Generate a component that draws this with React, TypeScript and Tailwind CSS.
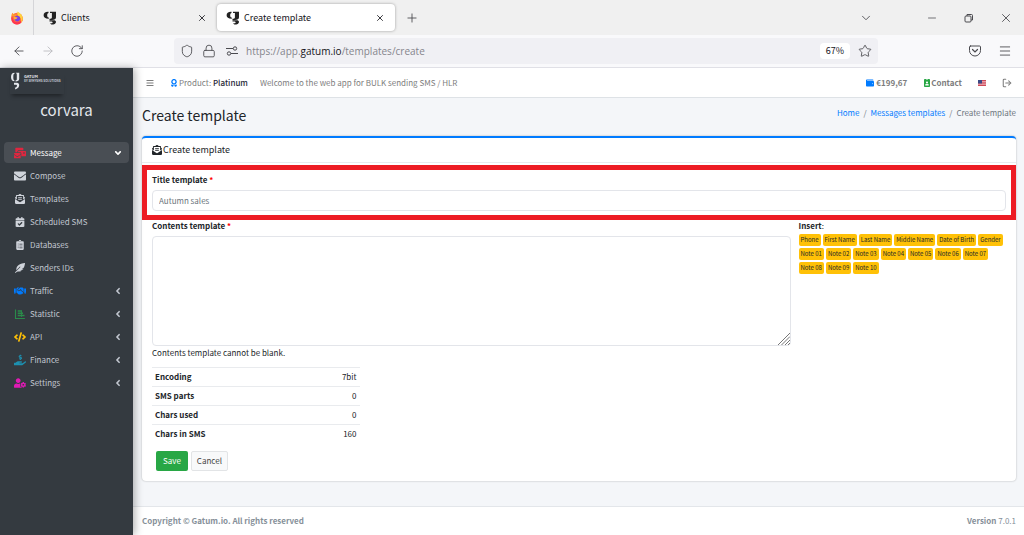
import type { ReactNode } from "react";
import type { IconType } from "react-icons";
import {
  FaAngleDown,
  FaAngleLeft,
  FaAward,
  FaBars,
  FaCalendarCheck,
  FaClipboardList,
  FaCode,
  FaEnvelope,
  FaEnvelopeOpenText,
  FaFeatherAlt,
  FaHandHoldingUsd,
  FaHandshake,
  FaIdBadge,
  FaMailBulk,
  FaUserCog,
  FaWallet,
} from "react-icons/fa";
import {
  ArrowLeft,
  ArrowRight,
  ChevronDown,
  Lock,
  LogOut,
  Menu,
  Minus,
  Plus,
  RotateCw,
  Shield,
  Star,
  X,
} from "lucide-react";

type NavItem = {
  label: string;
  icon: IconType;
  color: string;
  state?: "open" | "closed";
};

const ChartIcon: IconType = ({ className }) => (
  <svg viewBox="0 0 16 16" className={className} fill="none" stroke="currentColor" aria-hidden="true">
    <path d="M2 2v12h12.500" strokeWidth="1.500" />
    <path d="M5 4h5M5 7h7M5 10h9" strokeWidth="1.700" />
    <path d="M10 3v9" strokeWidth="1.200" />
  </svg>
);

const NAV: NavItem[] = [
  { label: "Message", icon: FaMailBulk, color: "text-[#e0263f]", state: "open" },
  { label: "Compose", icon: FaEnvelope, color: "text-[#d0d4db]" },
  { label: "Templates", icon: FaEnvelopeOpenText, color: "text-[#d0d4db]" },
  { label: "Scheduled SMS", icon: FaCalendarCheck, color: "text-[#d0d4db]" },
  { label: "Databases", icon: FaClipboardList, color: "text-[#d0d4db]" },
  { label: "Senders IDs", icon: FaFeatherAlt, color: "text-[#d0d4db]" },
  { label: "Traffic", icon: FaHandshake, color: "text-[#007bff]", state: "closed" },
  { label: "Statistic", icon: ChartIcon, color: "text-[#2a8a4a]", state: "closed" },
  { label: "API", icon: FaCode, color: "text-[#ffc107]", state: "closed" },
  { label: "Finance", icon: FaHandHoldingUsd, color: "text-[#1d90b0]", state: "closed" },
  { label: "Settings", icon: FaUserCog, color: "text-[#e01ab4]", state: "closed" },
];

const TAGS = [
  "Phone", "First Name", "Last Name", "Middle Name", "Date of Birth", "Gender",
  "Note 01", "Note 02", "Note 03", "Note 04", "Note 05", "Note 06", "Note 07",
  "Note 08", "Note 09", "Note 10",
];

const STATS = [
  ["Encoding", "7bit"],
  ["SMS parts", "0"],
  ["Chars used", "0"],
  ["Chars in SMS", "160"],
];

function GatumMark({ className }: { className?: string }) {
  return (
    <svg viewBox="0 0 14 14" className={className} fill="currentColor" aria-hidden="true">
      <path d="M5.500.8C2.400.6.600 2 .600 4.200S2.600 7.800 5.800 7.700V6.600C4.600 6.500 4.200 5.700 4.200 4.200S4.600 2 5.500 1.900z" />
      <path d="M7 .8h6v5.400c0 1.800-1.400 2.700-4 2.700H6.500V7.800c1.700 0 2.400-.4 2.400-1.600V2H7z" />
      <path d="M6.500 9.300h4c1.700 0 2.500.6 2.500 1.700 0 1.700-1.700 2.600-4.700 2.600l-1.300-1.300c1.700 0 2.600-.3 2.600-.9s-.5-.8-1.600-.8H6.500z" />
    </svg>
  );
}

function Firefox() {
  return (
    <svg viewBox="0 0 24 24" className="size-3.5" aria-hidden="true">
      <circle cx="12" cy="13" r="10" fill="#ff7139" />
      <path d="M3 8C1 15 4 23 12 23s11-7 9.500-13c-1 8-6 10-11 9S5 12 3 8z" fill="#ff3550" />
      <path d="M13 1c5 3 9 7 9 12 0 3-1 5-3 7 1-6-1-9-4-11s-3-5-2-8z" fill="#ffd23e" />
      <path d="M2 8l2-5 3 3 5 0-3 4z" fill="#ff9a2e" />
      <circle cx="12.500" cy="13" r="4.800" fill="#7542e5" />
      <path d="M6 11c3-2 5 0 7 0-1 3-4 2-5 4z" fill="#ffb13b" />
    </svg>
  );
}

function BrowserTab({ title, active }: { title: string; active?: boolean }) {
  return (
    <div
      className={`flex items-center px-2 text-[#15141a] ${
        active ? "my-1 w-[178px] rounded-sm bg-white shadow-[0_0_3px_rgba(0,0,0,0.35)]" : "w-[183px]"
      }`}
    >
      <GatumMark className="mr-1 ml-px size-3.5 text-[#222]" />
      <span className="flex-1">{title}</span>
      <button type="button" aria-label={`Close ${title}`} className="px-0.5">
        <X className="size-2.5" strokeWidth={2} />
      </button>
    </div>
  );
}

function BrowserChrome() {
  return (
    <header className="font-['Noto_Sans_CJK_SC',sans-serif] text-[9px] leading-4 text-[#4a4a4f]">
      <div className="flex h-[35px] bg-[#f0f0f0]">
        <div className="flex w-[34px] items-center justify-center border-r border-[#d5d5d8]">
          <Firefox />
        </div>
        <BrowserTab title="Clients" />
        <BrowserTab title="Create template" active />
        <button type="button" aria-label="New tab" className="px-2.5">
          <Plus className="size-3.5" strokeWidth={1.5} />
        </button>
        <div className="ml-auto flex items-center">
          <button type="button" aria-label="List all tabs" className="mr-[53px]">
            <ChevronDown className="size-3.5" strokeWidth={1.5} />
          </button>
          <button type="button" aria-label="Minimize" className="mr-[26px]">
            <Minus className="size-3" strokeWidth={1.5} />
          </button>
          <button type="button" aria-label="Restore" className="mr-[25px]">
            <svg viewBox="0 0 10 10" className="size-2.5" fill="none" stroke="currentColor">
              <rect x="1" y="3" width="6" height="6" rx="1" />
              <path d="M3 3V1.500h4.500a1 1 0 0 1 1 1V7H7" />
            </svg>
          </button>
          <button type="button" aria-label="Close" className="mr-[11px]">
            <X className="size-3.5" strokeWidth={1.5} />
          </button>
        </div>
      </div>
      <div className="flex h-[33px] items-center border-b border-[#e0e0e6] bg-[#f9f9fb]">
        <button type="button" aria-label="Back" className="ml-3">
          <ArrowLeft className="size-3.5" strokeWidth={1.5} />
        </button>
        <button type="button" aria-label="Forward" className="ml-[15px] text-[#b9b9be]">
          <ArrowRight className="size-3.5" strokeWidth={1.5} />
        </button>
        <button type="button" aria-label="Reload" className="ml-[15px]">
          <RotateCw className="size-3.5" strokeWidth={1.5} />
        </button>
        <div className="mr-[90px] ml-[90px] flex h-[26px] flex-1 items-center rounded-sm bg-[#f0f0f4] px-1.5">
          <Shield className="size-3.5" strokeWidth={1.5} />
          <Lock className="ml-2 size-3.5" strokeWidth={1.5} />
          <svg viewBox="0 0 12 10" className="ml-2.5 h-2.5 w-3" fill="none" stroke="currentColor" aria-hidden="true">
            <path d="M0 2.500h7M5 7.500h7" />
            <circle cx="9" cy="2.500" r="1.700" />
            <circle cx="3" cy="7.500" r="1.700" />
          </svg>
          <p className="ml-2 flex-1 font-['Open_Sans',sans-serif] text-[10px] text-[#85858c]">
            https://app.<span className="text-[#15141a]">gatum.io</span>/templates/create
          </p>
          <span className="rounded-sm bg-white px-1.5 text-[#15141a]">67%</span>
          <button type="button" aria-label="Bookmark" className="ml-2">
            <Star className="size-3.5" strokeWidth={1.5} />
          </button>
        </div>
        <button type="button" aria-label="Save to Pocket" className="mr-4">
          <svg viewBox="0 0 14 14" className="size-3.5" fill="none" stroke="currentColor" strokeLinecap="round">
            <path d="M2.500 2h9a1 1 0 0 1 1 1v3.500a5.500 5.500 0 0 1-11 0V3a1 1 0 0 1 1-1z" />
            <path d="M4.500 5.500L7 8l2.500-2.500" strokeWidth="1.200" />
          </svg>
        </button>
        <button type="button" aria-label="Open menu" className="mr-3">
          <Menu className="size-3.5" strokeWidth={1.5} />
        </button>
      </div>
    </header>
  );
}

function Sidebar() {
  return (
    <aside className="z-10 w-[133px] shrink-0 bg-[#343a40] px-1 text-[#c2c7d0] shadow-[2px_0_8px_rgba(0,0,0,0.3)]">
      <a href="#" className="mt-1 ml-1.5 flex w-[54px] items-start gap-1 pb-1 text-[#e4e7ec] shadow-[0_4px_4px_-2px_rgba(0,0,0,0.4)]">
        <svg viewBox="0 0 10 18" className="h-[18px] w-2.5 shrink-0" fill="currentColor" aria-hidden="true">
          <path d="M4.500.8C2.300.8 1 2.300 1 5s1.300 4.300 3.500 4.300V8.400C3.600 8.200 3.300 7.200 3.300 5s.3-3 1.200-3.200z" />
          <path d="M5.500.8c.9.200 1.300.8 1.300 2V7c0 1-.4 1.300-1.300 1.500v1c2.400 0 3.700-.8 3.700-2.700V.8z" />
          <path d="M4 10.800h3c1.500.2 2.200 1 2.200 2.300 0 2-1.400 3.600-3.700 4.300l-.7-1.700c1.500-.4 2.200-1.200 2.200-2 0-.7-.5-1-1.300-1H4z" />
        </svg>
        <span className="pt-0.5 text-[4px] leading-[5px] font-bold whitespace-nowrap">
          GATUM
          <span className="block text-[3px] text-[#c2c7d0]">BY SEMYSMS SOLUTIONS</span>
        </span>
      </a>
      <p className="mt-1 text-center text-[15px] leading-6 text-[#e4e7ec]">corvara</p>
      <nav className="mt-5">
        <ul className="flex flex-col gap-0.5">
          {NAV.map(({ label, icon: Icon, color, state }) => (
            <li key={label}>
              <a
                href="#"
                className={`flex h-[21px] items-center rounded-sm pr-1.5 pl-2.5 ${
                  state === "open" ? "bg-[#494e54] text-white" : ""
                }`}
              >
                <span className="flex w-4 justify-start">
                  <Icon className={`${state || label === "Compose" ? "size-3" : "mx-px size-2.5"} ${color}`} />
                </span>
                <span className="flex-1">{label}</span>
                {state === "open" && <FaAngleDown className="size-2.5" />}
                {state === "closed" && <FaAngleLeft className="size-2.5" />}
              </a>
            </li>
          ))}
        </ul>
      </nav>
    </aside>
  );
}

function UsFlag() {
  return (
    <svg viewBox="0 0 8 6" className="h-1.5 w-2" aria-label="English">
      <path d="M0 0h8v6H0z" fill="#f4c9cd" />
      <path d="M0 .5h8M0 2.200h8M0 3.900h8M0 5.500h8" stroke="#c8394b" strokeWidth=".9" />
      <path d="M0 0h4v3.500H0z" fill="#3c4a86" />
    </svg>
  );
}

function Topbar() {
  return (
    <div className="flex h-[30px] items-center border-b border-[#dee2e6] bg-white px-2 text-[#7d7d7d]">
      <button type="button" aria-label="Toggle menu" className="ml-[5px]">
        <FaBars className="size-2" />
      </button>
      <p className="ml-4 flex items-center">
        <FaAward className="mr-px size-2 text-[#007bff]" />
        Product:&nbsp;<span className="font-medium text-[#1f2937]">Platinum</span>
      </p>
      <p className="ml-3">Welcome to the web app for BULK sending SMS / HLR</p>
      <div className="ml-auto flex items-center gap-4 font-bold">
        <a href="#" className="flex items-center gap-0.5">
          <FaWallet className="size-2 text-[#007bff]" />
          €199,67
        </a>
        <a href="#" className="flex items-center">
          <FaIdBadge className="size-2 text-[#28a745]" />
          Contact
        </a>
        <UsFlag />
        <button type="button" aria-label="Sign out" className="mr-1">
          <LogOut className="size-2.5" strokeWidth={2.5} />
        </button>
      </div>
    </div>
  );
}

function Label({ htmlFor, children }: { htmlFor: string; children: ReactNode }) {
  return (
    <label htmlFor={htmlFor} className="block font-bold">
      {children} <span className="text-[#f00]">*</span>
    </label>
  );
}

function TemplateForm() {
  return (
    <form className="rounded-sm border-t-2 border-[#007bff] bg-white pb-2.5 shadow-[0_0_2px_rgba(0,0,0,0.3)]">
      <h2 className="flex h-[25px] items-center gap-px border-b border-[#e9ebee] px-2.5 text-[9px]">
        <FaEnvelopeOpenText className="size-2.5" />
        Create template
      </h2>
      <div className="mt-0.5 border-[5px] border-[#ed1c24] px-[5px] pt-1 pb-1">
        <Label htmlFor="title">Title template</Label>
        <input
          id="title"
          type="text"
          defaultValue="Autumn sales"
          className="mt-1 block h-[21px] w-full rounded-sm border border-[#e3e5ea] px-1.5 text-[#6c757d]"
        />
      </div>
      <div className="grid grid-cols-4 gap-x-2 px-2.5">
        <div className="col-span-3">
          <Label htmlFor="contents">Contents template</Label>
          <div className="relative mt-1">
            <textarea
              id="contents"
              className="block h-[110px] w-full resize-none rounded-sm border border-[#e3e5ea] px-1.5 py-1"
            />
            <svg
              viewBox="0 0 12 12"
              className="pointer-events-none absolute right-px bottom-px size-3"
              stroke="#777"
              aria-hidden="true"
            >
              <path d="M0 12L12 0M3.500 12L12 3.500M7 12l5-5M10 12l2-2" />
            </svg>
          </div>
          <p className="mt-px">Contents template cannot be blank.</p>
        </div>
        <div>
          <p>
            <b>Insert</b>:
          </p>
          <div className="mt-0.5 flex flex-wrap gap-0.5">
            {TAGS.map((tag) => (
              <button key={tag} type="button" className="h-3 rounded-xs bg-[#ffc107] px-0.5 text-[6px] leading-3">
                {tag}
              </button>
            ))}
          </div>
        </div>
        <table className="mt-2 w-full">
          <tbody>
            {STATS.map(([name, value]) => (
              <tr key={name} className="border-t border-[#e9ebee]">
                <th scope="row" className="px-[3px] py-[3px] text-left font-bold">{name}</th>
                <td className="px-[3px] py-[3px] text-right">{value}</td>
              </tr>
            ))}
          </tbody>
        </table>
      </div>
      <div className="mt-2 flex gap-[3px] px-3.5">
        <button type="submit" className="h-5 rounded-xs bg-[#28a745] px-[7px] text-white">
          Save
        </button>
        <button type="button" className="h-5 rounded-xs border border-[#e2e4e6] bg-[#f8f9fa] px-[5px] text-[#444]">
          Cancel
        </button>
      </div>
    </form>
  );
}

export default function App() {
  return (
    <div className="flex min-h-screen flex-col">
      <BrowserChrome />
      <div className="flex flex-1 font-['Noto_Sans_CJK_SC',sans-serif] text-[8px] leading-3 text-[#212529]">
        <Sidebar />
        <div className="flex min-w-0 flex-1 flex-col bg-[#f4f6f9]">
          <Topbar />
          <main className="flex-1 pr-2 pb-6 pl-[9px]">
            <div className="flex h-[38px] items-start justify-between pt-[7px]">
              <h1 className="text-[14px] leading-5">Create template</h1>
              <nav aria-label="Breadcrumb" className="flex gap-1 pt-0.5 text-[#6c757d]">
                <a href="#" className="text-[#007bff]">Home</a>
                <span>/</span>
                <a href="#" className="text-[#007bff]">Messages templates</a>
                <span>/</span>
                <span>Create template</span>
              </nav>
            </div>
            <TemplateForm />
          </main>
          <footer className="flex justify-between border-t border-[#e3e6ea] bg-white py-2 pr-2 pl-[9px] text-[#869099]">
            <b>Copyright © Gatum.io. All rights reserved</b>
            <p>
              <b>Version</b> 7.0.1
            </p>
          </footer>
        </div>
      </div>
    </div>
  );
}
